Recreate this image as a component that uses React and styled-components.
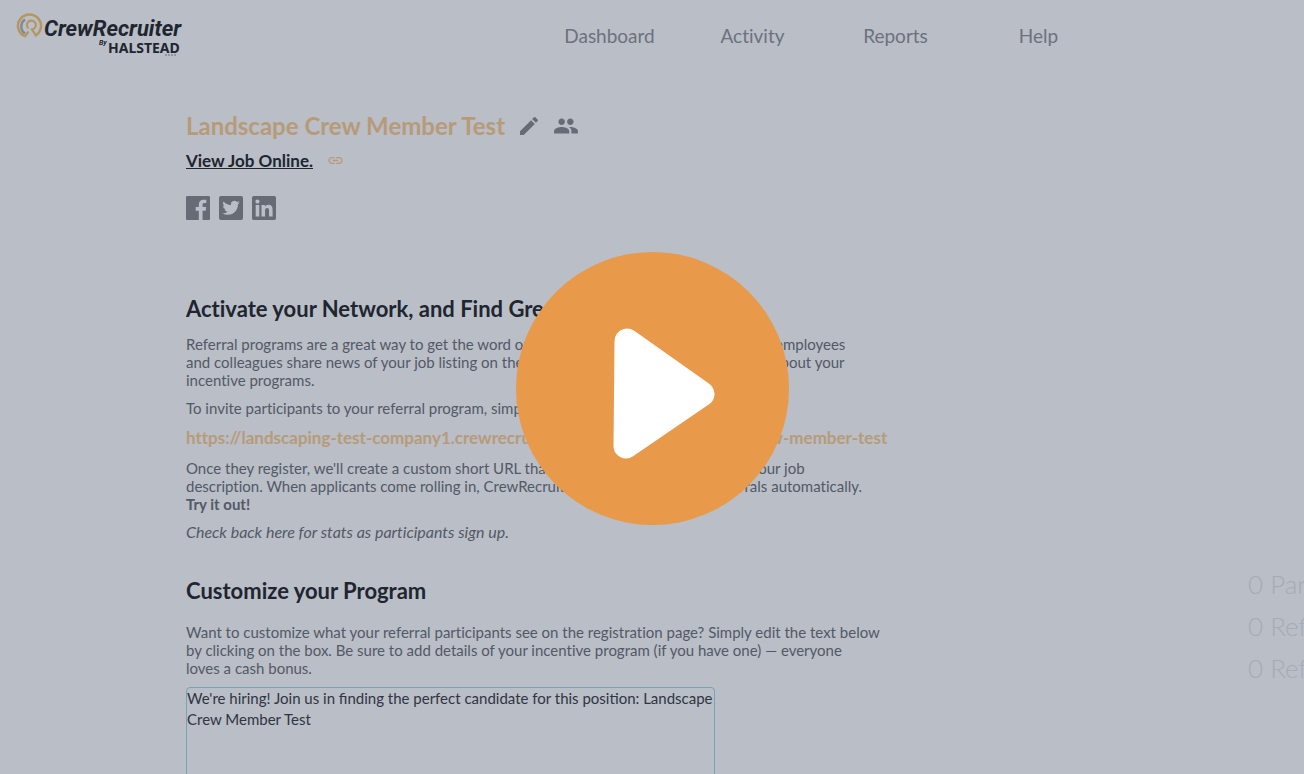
import React from 'react'
import styled, { createGlobalStyle } from 'styled-components'
import { MdEdit, MdPeople, MdLink } from 'react-icons/md'
import { FaLinkedin } from 'react-icons/fa'

const links = ['Dashboard', 'Activity', 'Reports', 'Help']
const stats = ['Participants', 'Referrals', 'Referred Hires']

function Logo() {
  return (
    <LogoLink href='#home' aria-label='CrewRecruiter by Halstead'>
      <svg width='176' height='50' viewBox='0 0 176 50'>
        <g fill='none'>
          <path d='M8 25A11.500 11.500 0 1 1 19 25' stroke='#b4975f' strokeWidth='2.500' />
          <path d='M9 22.500A8.500 8.500 0 0 1 9 8.500' stroke='#85888e' strokeWidth='2.500' />
          <path d='M8.500 26L12.500 20.500M12.500 17.500A4.500 4.500 0 1 1 16 18.500L20 24.500' stroke='#b4975f' strokeWidth='2.200' />
        </g>
        <LogoText x='28' y='25' $size={22}>CrewRecruiter</LogoText>
        <LogoText x='83' y='34' $size={7}>By</LogoText>
        <LogoName x='92' y='42'>HALSTEAD</LogoName>
        <path d='M149 44H161' stroke='#20252f' strokeWidth='1' strokeDasharray='2 1' opacity='0.5' />
      </svg>
    </LogoLink>
  )
}

function FacebookIcon() {
  return (
    <svg viewBox='0 -2 24 28' fill='currentColor'>
      <path d='M22.676 0H1.324C.593 0 0 .593 0 1.324v21.352C0 23.408.593 24 1.324 24h11.494v-9.294H9.689v-3.621h3.129V8.410c0-3.099 1.894-4.785 4.659-4.785 1.325 0 2.464.097 2.796.141v3.240h-1.921c-1.500 0-1.792.721-1.792 1.771v2.311h3.584l-.465 3.630H16.560V24h6.115c.733 0 1.325-.592 1.325-1.324V1.324C24 .593 23.408 0 22.676 0' />
    </svg>
  )
}

function TwitterIcon() {
  return (
    <svg viewBox='0 -2 24 28'>
      <rect width='24' height='24' rx='2' fill='currentColor' />
      <path
        transform='translate(3.400 3.200) scale(.72)'
        fill='#b9bec7'
        d='M23.953 4.570a10 10 0 01-2.825.775 4.958 4.958 0 002.163-2.723c-.951.555-2.005.959-3.127 1.184a4.920 4.920 0 00-8.384 4.482C7.690 8.095 4.067 6.130 1.640 3.162a4.822 4.822 0 00-.666 2.475c0 1.710.870 3.213 2.188 4.096a4.904 4.904 0 01-2.228-.616v.060a4.923 4.923 0 003.946 4.827 4.996 4.996 0 01-2.212.085 4.936 4.936 0 004.604 3.417 9.867 9.867 0 01-6.102 2.105c-.390 0-.779-.023-1.170-.067a13.995 13.995 0 007.557 2.209c9.053 0 13.998-7.496 13.998-13.985 0-.210 0-.420-.015-.630A9.935 9.935 0 0024 4.590z'
      />
    </svg>
  )
}

function App() {
  return (
    <Page>
      <GlobalStyle />
      <Header>
        <Logo />
        <Nav>
          {links.map((link) => (
            <a key={link} href={`#${link.toLowerCase()}`}>{link}</a>
          ))}
        </Nav>
      </Header>

      <Main>
        <TitleRow>
          <h1>Landscape Crew Member Test</h1>
          <IconButton aria-label='Edit job'><MdEdit size={24} /></IconButton>
          <IconButton aria-label='Crew members'><MdPeople size={26} /></IconButton>
        </TitleRow>
        <JobRow>
          <a href='#job'>View Job Online.</a>
          <MdLink size={17} />
        </JobRow>
        <Social>
          <a href='#facebook' aria-label='Facebook'><FacebookIcon /></a>
          <a href='#twitter' aria-label='Twitter'><TwitterIcon /></a>
          <a href='#linkedin' aria-label='LinkedIn'><FaLinkedin /></a>
        </Social>

        <Section>
          <Heading>Activate your Network, and Find Great Crew</Heading>
          <Text>
            Referral programs are a great way to get the word out about your job openings. Help your employees<br />
            and colleagues share news of your job listing on their social networks, and tell them more about your<br />
            incentive programs.
          </Text>
          <Text>To invite participants to your referral program, simply share this link:</Text>
          <ShareLink href='#share'>https://landscaping-test-company1.crewrecruiter.com/register/landscape-crew-member-test</ShareLink>
          <Text>
            Once they register, we'll create a custom short URL that they can share, which links to your job<br />
            description. When applicants come rolling in, CrewRecruiter will track all of your referrals automatically.<br />
            <strong>Try it out!</strong>
          </Text>
          <Text><em>Check back here for stats as participants sign up.</em></Text>
        </Section>

        <Program>
          <div>
            <Heading $tall as='label' htmlFor='message'>Customize your Program</Heading>
            <Text>
              Want to customize what your referral participants see on the registration page? Simply edit the text below<br />
              by clicking on the box. Be sure to add details of your incentive program (if you have one) — everyone<br />
              loves a cash bonus.
            </Text>
            <Message
              id='message'
              defaultValue={"We're hiring! Join us in finding the perfect candidate for this position: Landscape Crew Member Test"}
            />
          </div>
          <Stats>
            {stats.map((stat) => <li key={stat}>0 {stat}</li>)}
          </Stats>
        </Program>
      </Main>

      <Overlay>
        <PlayButton aria-label='Play video'>
          <svg width='104' height='134' viewBox='0 0 104 134'>
            <path d='M15 15L14 120L90 68Z' fill='#fff' stroke='#fff' strokeWidth='25' strokeLinejoin='round' />
          </svg>
        </PlayButton>
      </Overlay>
    </Page>
  )
}

export default App

const GlobalStyle = createGlobalStyle`
  * {
    box-sizing: border-box;
  }

  body {
    margin: 0;
    background: #b9bec7;
    font-family: Lato, sans-serif;
    font-variant-ligatures: none;
  }
`

const Page = styled.div`
  height: 100vh;
  overflow: hidden;
  color: #535965;
`

const Header = styled.header`
  display: flex;
  align-items: center;
  height: 72px;
  padding: 0 194px 0 16px;
`

const LogoLink = styled.a`
  display: flex;
`

const LogoText = styled.text`
  font: italic 700 ${(props) => props.$size}px Roboto, sans-serif;
  fill: #20252f;
`

const LogoName = styled.text`
  font: 700 14px 'Noto Sans', sans-serif;
  fill: #20252f;
`

const Nav = styled.nav`
  display: grid;
  grid-template-columns: repeat(4, 143px);
  margin-left: auto;

  a {
    color: #6d727c;
    font-size: 19px;
    line-height: 24px;
    text-align: center;
    text-decoration: none;
  }
`

const Main = styled.main`
  padding: 38px 0 0 186px;
`

const TitleRow = styled.div`
  display: flex;
  align-items: center;
  gap: 12px;
  height: 32px;

  h1 {
    margin: 0;
    color: #b79b78;
    font-size: 24px;
    font-weight: 700;
    line-height: 28px;
  }
`

const IconButton = styled.button`
  display: flex;
  padding: 0;
  border: none;
  background: none;
  color: #666b76;
  cursor: pointer;
`

const JobRow = styled.div`
  display: flex;
  align-items: center;
  gap: 14px;
  height: 36px;
  color: #b79b78;

  a {
    color: #20252f;
    font-size: 17px;
    font-weight: 700;
  }
`

const Social = styled.div`
  display: flex;
  gap: 9px;
  margin-top: 16px;

  a {
    display: flex;
    color: #666b76;
  }

  svg {
    width: 24px;
    height: 28px;
  }
`

const Section = styled.section`
  margin-top: 73px;
`

const Heading = styled.h2`
  display: block;
  margin: 0;
  padding: ${(props) => (props.$tall ? '14px 0 18px' : '0 0 12px')};
  color: #20252f;
  font-size: 22px;
  font-weight: 700;
  line-height: 28px;
  white-space: nowrap;
`

const Text = styled.p`
  margin: 0 0 10px;
  font-size: 15px;
  line-height: 18px;
  white-space: nowrap;

  em {
    font-size: 16px;
  }
`

const ShareLink = styled.a`
  display: block;
  margin-bottom: 10px;
  color: #b79b78;
  font-size: 17px;
  font-weight: 700;
  line-height: 22px;
  text-decoration: none;
  white-space: nowrap;
`

const Program = styled.section`
  display: flex;
  justify-content: space-between;
  margin-top: 22px;
`

const Message = styled.textarea`
  display: block;
  width: 529px;
  height: 120px;
  padding: 0;
  border: 1px solid #78a3b1;
  border-radius: 4px;
  outline: none;
  background: transparent;
  color: #303542;
  font-family: inherit;
  font-size: 15px;
  line-height: 21px;
  resize: none;
`

const Stats = styled.ul`
  width: 56px;
  margin: 0;
  padding: 0;
  overflow: hidden;
  color: #a6abb7;
  font-size: 26px;
  font-weight: 300;
  line-height: 42px;
  list-style: none;
  white-space: nowrap;
`

// covers the page with the play button of the tour video
const Overlay = styled.div`
  position: fixed;
  inset: 0;
  display: grid;
  place-items: center;
  padding-top: 3px;
`

const PlayButton = styled.button`
  display: flex;
  align-items: center;
  justify-content: center;
  width: 273px;
  height: 273px;
  padding: 8px 0 0 24px;
  border: none;
  border-radius: 50%;
  background: #e8994a;
  cursor: pointer;
`
